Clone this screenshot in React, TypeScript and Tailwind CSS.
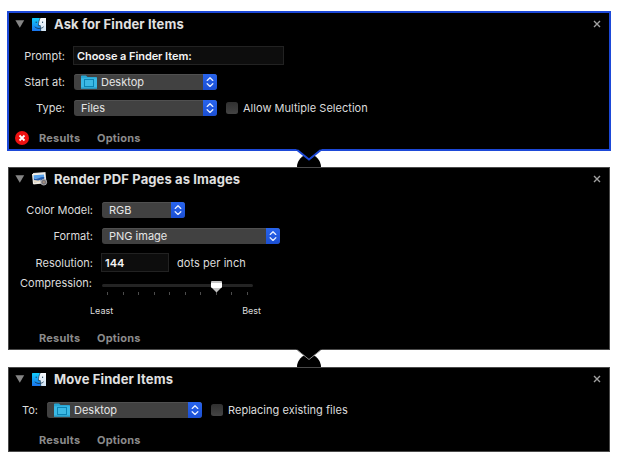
import type { ReactNode } from "react";

const FONT = "font-['Inter','Liberation_Sans',sans-serif]";

function FinderIcon() {
  return (
    <svg width="14" height="13" viewBox="0 0 14 13" className="shrink-0">
      <defs>
        <linearGradient id="finderLeft" x1="0" y1="0" x2="0" y2="1">
          <stop offset="0" stopColor="#12cdfb" />
          <stop offset="1" stopColor="#1a74ee" />
        </linearGradient>
        <linearGradient id="finderRight" x1="0" y1="0" x2="0" y2="1">
          <stop offset="0" stopColor="#f8fafc" />
          <stop offset="1" stopColor="#cfe2f3" />
        </linearGradient>
      </defs>
      <rect width="14" height="13" rx="0.5" fill="url(#finderLeft)" />
      <path d="M8.2 0H14V13H8.8C8.5 11.2 8.3 9.6 8.3 7.6H6.4C6.5 4.6 7 2.2 8.2 0Z" fill="url(#finderRight)" />
      <path d="M8.2 0C7 2.2 6.5 4.6 6.4 7.6H8.3C8.3 9.6 8.5 11.2 8.8 13" fill="none" stroke="#12344f" strokeWidth="0.7" />
      <path d="M4.2 3.6V5M10.6 3.6V5" stroke="#12344f" strokeWidth="0.9" />
      <path d="M2.8 8.8C5 11 9.4 11 11.6 8.8" fill="none" stroke="#12344f" strokeWidth="0.9" />
    </svg>
  );
}

function PreviewIcon() {
  return (
    <svg width="16" height="14" viewBox="0 0 16 14" className="shrink-0">
      <path d="M1 1L13.5 0L14.5 11L1.5 12.5Z" fill="#d9d9d9" />
      <path d="M0 2L13 1L13.5 11L1 12Z" fill="#f5f1e8" />
      <path d="M1.5 3.2L12 2.4L12.3 6L1.8 7Z" fill="#57a2ec" />
      <path d="M1.8 6.5C5 8 8 4.5 12.2 5L12.4 9L2 10.5Z" fill="#2459a8" />
      <path d="M2 8C5 8.2 7 9 8.5 7.5L8.8 10L2 10.8Z" fill="#e9dcc6" />
      <circle cx="11.8" cy="10.2" r="2.9" fill="#77757b" stroke="#b5b5b8" strokeWidth="0.8" />
      <circle cx="11.8" cy="10.2" r="1.1" fill="#a58e7c" />
    </svg>
  );
}

function FolderIcon() {
  return (
    <svg width="16" height="14" viewBox="0 0 16 14" className="shrink-0">
      <path d="M0 1.3Q0 0.6 0.8 0.6H5L6.5 2H15.3Q16 2 16 2.8V13.4H0Z" fill="#27a5d3" />
      <path d="M0 3.3H16V13.4H0Z" fill="#3bb9e5" />
      <rect x="3.5" y="4.5" width="9" height="7" fill="#3db9e4" stroke="#0b84b4" strokeWidth="1" />
      <path d="M0 13H16" stroke="#2291bb" strokeWidth="0.8" />
    </svg>
  );
}

function Select({ className, children }: { className: string; children: ReactNode }) {
  return (
    <div className={`flex h-4 shrink-0 overflow-hidden rounded-[3px] bg-[#414141] shadow-[inset_0_1px_0_#505050] ${className}`}>
      <div className="flex min-w-0 flex-1 items-center pl-[7px] text-[#e6e6e6]">{children}</div>
      <div className="flex w-3.5 items-center justify-center bg-linear-to-b from-[#2864ed] to-[#1b4fd3]">
        <svg width="8" height="12" viewBox="0 0 8 12" fill="none" stroke="#e6eeff" strokeWidth="1.35" strokeLinecap="round" strokeLinejoin="round">
          <path d="M1.2 4.4L4 1.8L6.8 4.4M1.2 7.8L4 10.4L6.8 7.8" />
        </svg>
      </div>
    </div>
  );
}

function Field({ className, children }: { className: string; children: ReactNode }) {
  return (
    <div className={`flex h-[19px] shrink-0 items-center border border-[#222] bg-[#0d0d0d] pl-[3px] font-semibold text-[#f4f4f4] ${className}`}>
      {children}
    </div>
  );
}

function Checkbox({ className, children }: { className: string; children: ReactNode }) {
  return (
    <label className={`flex items-center gap-[5px] ${className}`}>
      <span className="size-3 rounded-[2.5px] bg-linear-to-b from-[#303030] to-[#444]" />
      <span className="tracking-[0.03px]">{children}</span>
    </label>
  );
}

function Row({ className = "items-center", label, labelClass, children }: { className?: string; label: ReactNode; labelClass: string; children: ReactNode }) {
  return (
    <div className={`flex ${className}`}>
      <div className={`flex shrink-0 justify-end ${labelClass}`}>{label}</div>
      {children}
    </div>
  );
}

function Header({ icon, children }: { icon: ReactNode; children: ReactNode }) {
  return (
    <div className="flex h-5 items-center pr-2 pl-[6px]">
      <svg width="10" height="8" viewBox="0 0 10 8" className="mr-[7px]">
        <path d="M0.4 0.2H9.2L4.8 7.8Z" fill="#858585" />
      </svg>
      <div className="flex w-[22px]">{icon}</div>
      <h2 className="text-[13px] font-bold tracking-[0.11px] text-[#e0e0e0]">{children}</h2>
      <svg width="8" height="8" viewBox="0 0 8 8" className="ml-auto" stroke="#a0a0a0" strokeWidth="1.4">
        <path d="M1 1L7 7M7 1L1 7" />
      </svg>
    </div>
  );
}

function Footer({ error = false }: { error?: boolean }) {
  return (
    <div className="flex h-4 items-center pl-[6px] font-bold text-[#8b8b8b]">
      <div className="w-6">
        {error && (
          <svg width="14" height="14" viewBox="0 0 14 14">
            <circle cx="7" cy="7" r="7" fill="#ee1111" />
            <path d="M4.5 4.5L9.5 9.5M9.5 4.5L4.5 9.5" stroke="#fff" strokeWidth="1.8" />
          </svg>
        )}
      </div>
      <span className="w-[58px] tracking-[0.2px]">Results</span>
      <span className="tracking-[0.2px]">Options</span>
    </div>
  );
}

function Connector({ className, color, width }: { className: string; color: string; width: number }) {
  return (
    <svg width="26" height="20" viewBox="0 0 26 20" className={`absolute z-10 ${className}`}>
      <path d="M1 18A12 12.5 0 0 1 25 18Z" fill="#000" />
      <path d="M0 0H26L24.5 1L13 10.5L1.5 1Z" fill="#000" />
      <path d="M1.2 1L13 10.5L24.8 1" fill="none" stroke={color} strokeWidth={width} />
    </svg>
  );
}

const TICKS = [5, 21, 36, 52, 67, 83, 98, 114, 129, 145];

export default function App() {
  return (
    <main className={`h-[464px] w-[618px] bg-white pt-[11px] text-[11px] leading-4 text-[#dcdcdc] ${FONT}`}>
      <section className="relative ml-[7px] h-[140px] w-[604px] border-2 border-[#1d49d8] bg-black pt-[1px]">
        <Header icon={<FinderIcon />}>Ask for Finder Items</Header>
        <Row className="mt-3 items-center" label="Prompt:" labelClass="w-14">
          <Field className="ml-2 w-[211px] tracking-[-0.07px]">Choose a Finder Item:</Field>
        </Row>
        <Row className="mt-[9px] items-center" label="Start at:" labelClass="w-14">
          <Select className="ml-[9px] w-[143px]">
            <FolderIcon />
            <span className="ml-1">Desktop</span>
          </Select>
        </Row>
        <Row className="mt-2.5 items-center" label="Type:" labelClass="w-14">
          <Select className="ml-[9px] w-[143px]">Files</Select>
          <Checkbox className="ml-[9px]">Allow Multiple Selection</Checkbox>
        </Row>
        <div className="mt-3.5">
          <Footer error />
        </div>
        <Connector className="top-[136px] left-[287px]" color="#1d49d8" width={2} />
      </section>

      <section className="relative mt-4 ml-2 h-[183px] w-[602px] border border-[#4a4a4a] bg-black pt-[1px]">
        <Header icon={<PreviewIcon />}>Render PDF Pages as Images</Header>
        <Row className="mt-[13px] items-center" label="Color Model:" labelClass="w-[84px]">
          <Select className="ml-[9px] w-[83px]">RGB</Select>
        </Row>
        <Row className="mt-2.5 items-center" label="Format:" labelClass="w-[84px]">
          <Select className="ml-[9px] w-[178px]">PNG image</Select>
        </Row>
        <Row className="mt-[9px] items-center" label="Resolution:" labelClass="w-[84px]">
          <Field className="ml-2 w-[68px]">144</Field>
          <span className="ml-2 tracking-[0.06px]">dots per inch</span>
        </Row>
        <Row className="mt-[3px] items-start" label="Compression:" labelClass="w-[84px] pr-[1px]">
          <svg width="151" height="16" viewBox="0 0 151 16" className="mt-[5px] ml-[9px]">
            <rect y="4" width="151" height="3" rx="1.5" fill="#242424" />
            {TICKS.map((x) => (
              <rect key={x} x={x} y="12" width="1" height="3" fill="#4c4c4c" />
            ))}
            <path d="M109 2Q109 1 110 1H119Q120 1 120 2V7L114.5 12.5L109 7Z" fill="#c4c4c4" />
            <path d="M109 3H120V7L119 8H110L109 7Z" fill="#fff" />
          </svg>
        </Row>
        <div className="mt-[9px] flex justify-between pr-[348px] pl-[81px] text-[9px] leading-3">
          <span>Least</span>
          <span>Best</span>
        </div>
        <div className="mt-[13px]">
          <Footer />
        </div>
        <Connector className="top-[181px] left-[287px]" color="#8a8a8a" width={1} />
      </section>

      <section className="mt-[17px] ml-2 h-[85px] w-[602px] border border-[#4a4a4a] bg-black pt-[1px]">
        <Header icon={<FinderIcon />}>Move Finder Items</Header>
        <Row className="mt-[13px] items-center" label="To:" labelClass="w-[29px]">
          <Select className="ml-[9px] w-[155px]">
            <FolderIcon />
            <span className="ml-1">Desktop</span>
          </Select>
          <Checkbox className="ml-[9px]">Replacing existing files</Checkbox>
        </Row>
        <div className="mt-3.5">
          <Footer />
        </div>
      </section>
    </main>
  );
}
